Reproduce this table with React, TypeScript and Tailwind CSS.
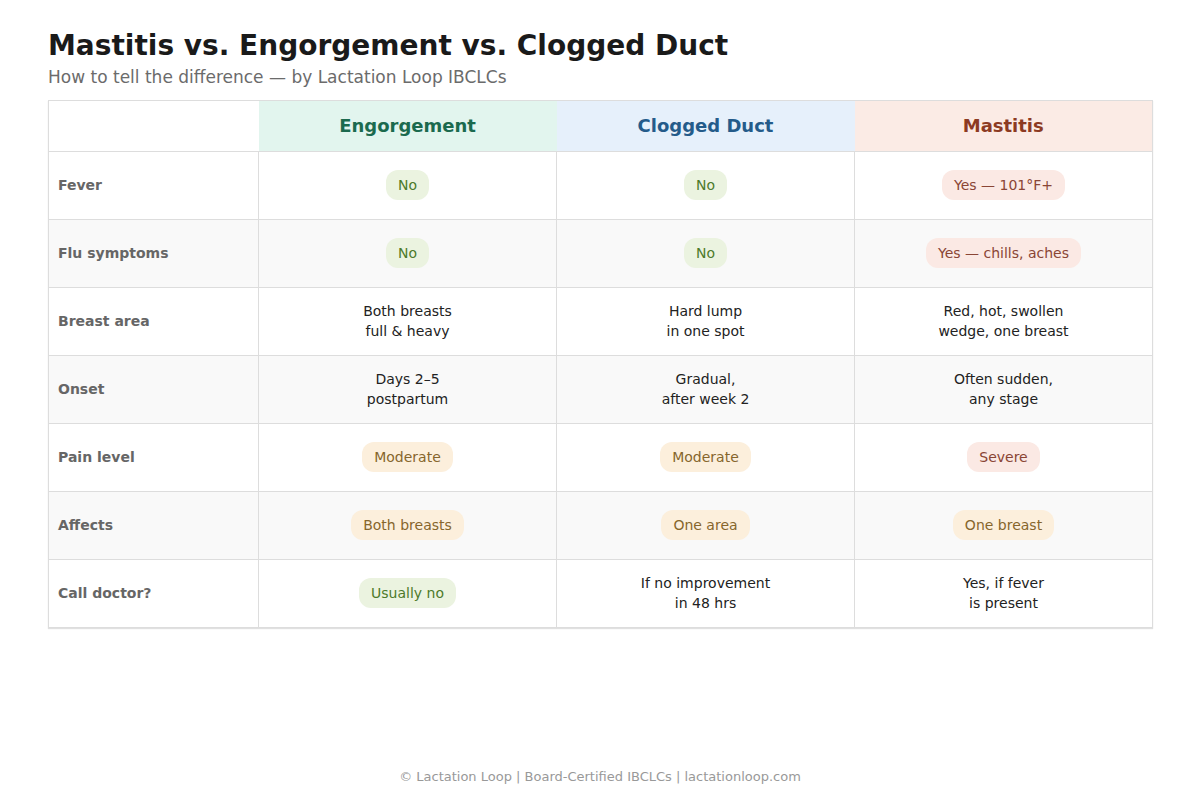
import React from "react";

type Tone = "green" | "amber" | "red";

type Cell = { text: string; pill?: Tone };

interface Row {
  label: string;
  cells: Cell[];
}

const pillTone: Record<Tone, string> = {
  green: "bg-[#ebf3e0] text-[#4d7a2a]",
  amber: "bg-[#fcefdc] text-[#86662c]",
  red: "bg-[#fbe9e4] text-[#8a4535]",
};

const rows: Row[] = [
  {
    label: "Fever",
    cells: [
      { text: "No", pill: "green" },
      { text: "No", pill: "green" },
      { text: "Yes — 101°F+", pill: "red" },
    ],
  },
  {
    label: "Flu symptoms",
    cells: [
      { text: "No", pill: "green" },
      { text: "No", pill: "green" },
      { text: "Yes — chills, aches", pill: "red" },
    ],
  },
  {
    label: "Breast area",
    cells: [
      { text: "Both breasts\nfull & heavy" },
      { text: "Hard lump\nin one spot" },
      { text: "Red, hot, swollen\nwedge, one breast" },
    ],
  },
  {
    label: "Onset",
    cells: [
      { text: "Days 2–5\npostpartum" },
      { text: "Gradual,\nafter week 2" },
      { text: "Often sudden,\nany stage" },
    ],
  },
  {
    label: "Pain level",
    cells: [
      { text: "Moderate", pill: "amber" },
      { text: "Moderate", pill: "amber" },
      { text: "Severe", pill: "red" },
    ],
  },
  {
    label: "Affects",
    cells: [
      { text: "Both breasts", pill: "amber" },
      { text: "One area", pill: "amber" },
      { text: "One breast", pill: "amber" },
    ],
  },
  {
    label: "Call doctor?",
    cells: [
      { text: "Usually no", pill: "green" },
      { text: "If no improvement\nin 48 hrs" },
      { text: "Yes, if fever\nis present" },
    ],
  },
];

const headers = [
  { title: "Engorgement", cls: "bg-[#e2f5ee] text-[#1b6a4e]" },
  { title: "Clogged Duct", cls: "bg-[#e6f0fb] text-[#245b8a]" },
  { title: "Mastitis", cls: "bg-[#fbebe5] text-[#8c3a22]" },
];

function CellContent({ cell }: { cell: Cell }) {
  if (cell.pill) {
    return (
      <span
        className={`inline-block rounded-[12px] px-3 py-[5px] leading-[20px] ${pillTone[cell.pill]}`}
      >
        {cell.text}
      </span>
    );
  }
  return <div className="whitespace-pre-line leading-[20px] text-[#222]">{cell.text}</div>;
}

export default function App() {
  return (
    <div
      className="relative h-[800px] w-[1200px] bg-white px-12 pt-[29px]"
      style={{ fontFamily: '"DejaVu Sans", Verdana, sans-serif' }}
    >
      <h1 className="text-[28px] font-bold leading-[34px] text-[#1a1a1a]">
        Mastitis vs. Engorgement vs. Clogged Duct
      </h1>
      <p className="mt-[4px] text-[17px] leading-[20px] text-[#6b6b6b]">
        How to tell the difference — by Lactation Loop IBCLCs
      </p>

      <table className="mt-[13px] w-[1104px] table-fixed border-collapse border border-[#dddddd] text-[14px] shadow-[0_1px_1px_rgba(0,0,0,0.12)]">
        <colgroup>
          <col className="w-[210px]" />
          <col className="w-[298px]" />
          <col className="w-[298px]" />
          <col className="w-[298px]" />
        </colgroup>
        <thead>
          <tr className="h-[51px]">
            <th className="bg-white" />
            {headers.map((h) => (
              <th key={h.title} className={`pb-[2px] text-center text-[18px] font-bold ${h.cls}`}>
                {h.title}
              </th>
            ))}
          </tr>
        </thead>
        <tbody>
          {rows.map((row, i) => (
            <tr key={row.label} className={`h-[68px] ${i % 2 === 1 ? "bg-[#f9f9f9]" : "bg-white"}`}>
              <td className="border border-[#dddddd] pl-[9px] text-left font-bold text-[#666]">
                {row.label}
              </td>
              {row.cells.map((cell, j) => (
                <td key={j} className="border border-[#dddddd] pb-[2px] text-center">
                  <CellContent cell={cell} />
                </td>
              ))}
            </tr>
          ))}
        </tbody>
      </table>

      <div className="absolute bottom-[14px] left-0 right-0 text-center text-[13px] text-[#999]">
        © Lactation Loop | Board-Certified IBCLCs | lactationloop.com
      </div>
    </div>
  );
}
